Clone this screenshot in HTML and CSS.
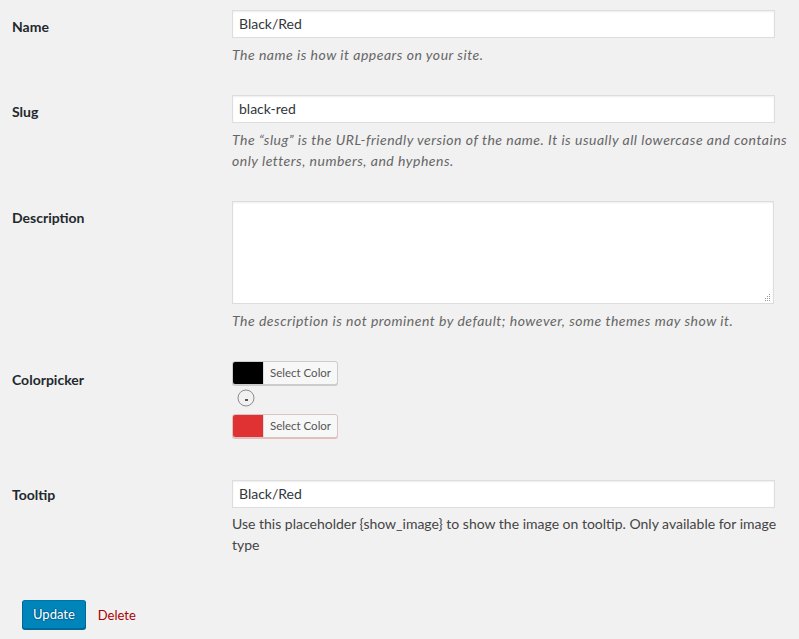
FILE: index.html
```html
<!DOCTYPE html>
<html>
<head>
<meta charset="utf-8">
<link rel="stylesheet" href="styles.css">
</head>
<body>
<div class="page">
  <div class="row">
    <div class="label">Name</div>
    <div class="field">
      <div class="input">Black/Red</div>
      <p class="desc">The name is how it appears on your site.</p>
    </div>
  </div>
  <div class="row">
    <div class="label">Slug</div>
    <div class="field">
      <div class="input">black-red</div>
      <p class="desc">The “slug” is the URL-friendly version of the name. It is usually all lowercase and contains only letters, numbers, and hyphens.</p>
    </div>
  </div>
  <div class="row">
    <div class="label">Description</div>
    <div class="field">
      <div class="textarea">
        <svg class="grip" width="7" height="7" viewBox="0 0 7 7"><rect x="5" y="0" width="1" height="1"/><rect x="3" y="2" width="1" height="1"/><rect x="5" y="2" width="1" height="1"/><rect x="1" y="4" width="1" height="1"/><rect x="3" y="4" width="1" height="1"/><rect x="5" y="4" width="1" height="1"/><rect x="1" y="6" width="1" height="1"/><rect x="3" y="6" width="1" height="1"/><rect x="5" y="6" width="1" height="1"/></svg>
      </div>
      <p class="desc">The description is not prominent by default; however, some themes may show it.</p>
    </div>
  </div>
  <div class="row row-color">
    <div class="label">Colorpicker</div>
    <div class="field">
      <div class="color-btn"><span class="swatch swatch-black"></span><span class="color-text">Select Color</span></div>
      <svg class="remove" width="18" height="18" viewBox="0 0 18 18"><circle cx="9" cy="9" r="8" fill="none" stroke="#8c8c8c" stroke-width="1"/><rect x="8" y="10" width="3" height="2" fill="#555"/></svg>
      <div class="color-btn color-btn-red"><span class="swatch swatch-red"></span><span class="color-text">Select Color</span></div>
    </div>
  </div>
  <div class="row row-tooltip">
    <div class="label">Tooltip</div>
    <div class="field">
      <div class="input">Black/Red</div>
      <p class="desc desc-plain">Use this placeholder {show_image} to show the image on tooltip. Only available for image type</p>
    </div>
  </div>
  <div class="submit">
    <span class="btn-primary">Update</span>
    <span class="delete">Delete</span>
  </div>
</div>
</body>
</html>
```

FILE: styles.css
```css
html, body {
  margin: 0;
  padding: 0;
  background: #f1f1f1;
  overflow: hidden;
  width: 799px;
  height: 639px;
}
body {
  font-family: Lato, "Open Sans", sans-serif;
  font-size: 14px;
  color: #444;
}
.page {
  padding: 10px 0 0 12px;
}
.row {
  display: grid;
  grid-template-columns: 220px 572px;
  padding-bottom: 30px;
}
.row-color {
  padding-bottom: 42px;
}
.label {
  font-weight: 700;
  color: #23282d;
  font-size: 14px;
  line-height: 18px;
  padding-top: 8px;
}
.row-color .label {
  padding-top: 10px;
}
.row-tooltip .label {
  padding-top: 6px;
}
.field {
  display: flex;
  flex-direction: column;
  align-items: flex-start;
}
.input {
  box-sizing: border-box;
  width: 543px;
  height: 28px;
  background: #fff;
  border: 1px solid #ddd;
  box-shadow: inset 0 1px 2px rgba(0,0,0,0.07);
  padding: 0 6px;
  line-height: 26px;
  color: #32373c;
  font-size: 14px;
}
.textarea {
  box-sizing: border-box;
  width: 542px;
  height: 103px;
  background: #fff;
  border: 1px solid #ddd;
  box-shadow: inset 0 1px 2px rgba(0,0,0,0.07);
  display: flex;
  justify-content: flex-end;
  align-items: flex-end;
  padding: 0 2px 2px 0;
}
.grip {
  fill: #999;
}
.desc {
  margin: 6px 0 0;
  font-style: italic;
  color: #666;
  line-height: 21px;
  font-size: 14px;
  letter-spacing: 0.5px;
}
.desc-plain {
  font-style: normal;
  color: #444;
  margin-top: 5px;
  letter-spacing: 0;
}
.color-btn {
  box-sizing: border-box;
  display: flex;
  width: 106px;
  height: 24px;
  border: 1px solid #ccc;
  border-radius: 3px;
  background: #f7f7f7;
  box-shadow: 0 1px 0 #ccc;
  overflow: hidden;
}
.color-btn-red {
  border-color: #d9c4c4;
  box-shadow: 0 1px 0 #e8b9b9;
}
.swatch {
  width: 30px;
  flex: none;
}
.swatch-black { background: #000; }
.swatch-red { background: #e03232; }
.color-text {
  flex: 1;
  border-left: 1px solid #ddd;
  font-size: 11.5px;
  line-height: 22px;
  color: #555;
  text-align: center;
}
.remove {
  display: block;
  margin: 4px 0 7px 5px;
}
.submit {
  padding: 15px 0 0 10px;
  display: flex;
  align-items: center;
  gap: 12px;
}
.btn-primary {
  box-sizing: border-box;
  display: inline-block;
  height: 29px;
  padding: 0 10px;
  background: #0085ba;
  border: 1px solid;
  border-color: #0073aa #006799 #006799;
  border-radius: 3px;
  box-shadow: 0 1px 0 #006799;
  color: #fff;
  font-size: 13px;
  line-height: 26px;
  text-shadow: 0 -1px 1px #006799, 1px 0 1px #006799, 0 1px 1px #006799, -1px 0 1px #006799;
}
.delete {
  color: #a00;
  font-size: 13px;
}
```
